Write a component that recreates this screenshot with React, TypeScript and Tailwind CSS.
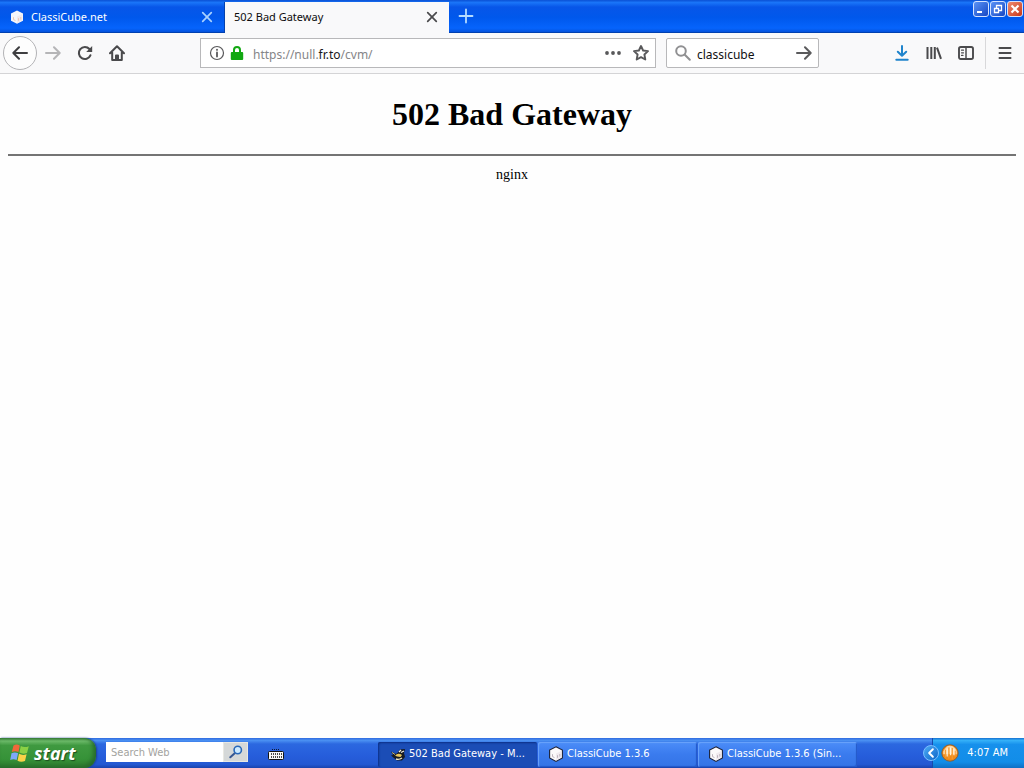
import type { ReactNode } from "react";

const UI = "font-['Noto_Sans','Open_Sans',sans-serif]";
const TASK = "font-['DejaVu_Sans_Condensed','DejaVu_Sans',sans-serif]";

function Stroke({ children, className = "size-4", w = 2 }: { children: ReactNode; className?: string; w?: number }) {
  return (
    <svg viewBox="0 0 16 16" className={className} fill="none" stroke="currentColor" strokeWidth={w} strokeLinecap="round" strokeLinejoin="round" aria-hidden="true">
      {children}
    </svg>
  );
}

function CubeIcon({ outline = false }: { outline?: boolean }) {
  return (
    <svg viewBox="0 0 16 16" className="size-4 shrink-0" aria-hidden="true">
      {outline ? (
        <path d="M8 .8 14.4 4v8L8 15.4 1.6 12V4z" fill="#fbf8fa" stroke="#1c2238" strokeWidth="1.1" />
      ) : (
        <path d="M8 1.5 14 4.5v7.2L8 14.8l-6-3.1V4.5z" fill="#f5f6fb" />
      )}
      <path d="M8 7.5 13.3 4.9v6.6L8 14.2z" fill="#f0e9ee" />
      <path d="M4.5 8.2v2.4l2 1M9.5 9.2v2.6M11.8 8v2.6" stroke={outline ? "#b9acb6" : "#ecc3ad"} strokeWidth=".9" fill="none" />
    </svg>
  );
}

function CloseIcon() {
  return (
    <Stroke className="size-4" w={1.7}>
      <path d="m3.7 3.7 8.6 8.6m0-8.6-8.6 8.6" />
    </Stroke>
  );
}

function ToolButton({ label, className = "text-[#4a4a4c]", children }: { label: string; className?: string; children: ReactNode }) {
  return (
    <button type="button" aria-label={label} className={`flex size-8 items-center justify-center ${className}`}>
      {children}
    </button>
  );
}

function WindowButton({ label, close = false, children }: { label: string; close?: boolean; children: ReactNode }) {
  return (
    <button
      type="button"
      aria-label={label}
      className={`flex size-4 items-center justify-center rounded-[3px] border border-[#d3e2ff] ${close ? "bg-linear-to-br from-[#ee8b70] to-[#c83310]" : "bg-linear-to-br from-[#5b92f5] to-[#1746c4]"}`}
    >
      <svg viewBox="0 0 14 14" className="size-3.5 text-white" fill="none" stroke="currentColor" aria-hidden="true">
        {children}
      </svg>
    </button>
  );
}

function TabStrip() {
  return (
    <header className="flex h-[33px] items-stretch border-b border-[#0040b0] bg-[linear-gradient(180deg,#0a50d4_0%,#1a75f8_8%,#0756e8_22%,#0058ec_55%,#0664fc_88%,#0452dc_100%)]">
      <div className="mt-0.5 flex w-[225px] items-center border-r border-[#0541ad] pl-[9px] pr-[9px] text-white">
        <CubeIcon />
        <span className={`ml-1.5 flex-1 text-[11px] ${UI}`}>ClassiCube.net</span>
        <button type="button" aria-label="Close ClassiCube.net" className="text-[#a9d2ff]"><CloseIcon /></button>
      </div>
      <div className="mt-0.5 -mb-px flex w-56 items-center bg-[#f9f9fa] px-[9px] pb-px text-[#0c0c0d]">
        <span className={`flex-1 text-[11px] ${UI}`}>502 Bad Gateway</span>
        <button type="button" aria-label="Close 502 Bad Gateway" className="text-[#4a4a4c]"><CloseIcon /></button>
      </div>
      <button type="button" aria-label="New tab" className="flex w-[34px] items-center justify-center text-[#b5dcff]">
        <Stroke w={1.8}><path d="M8 1.5v13M1.5 8h13" /></Stroke>
      </button>
      <div className="ml-auto flex gap-px pr-px pt-px">
        <WindowButton label="Minimize"><path d="M3 10h5" strokeWidth="2" /></WindowButton>
        <WindowButton label="Restore"><path d="M5.5 6V3.5h5v5H8M3.5 6.5h4v4h-4z" strokeWidth="1.3" /></WindowButton>
        <WindowButton label="Close window" close><path d="m3.5 3.5 7 7m0-7-7 7" strokeWidth="2.2" /></WindowButton>
      </div>
    </header>
  );
}

function Toolbar() {
  return (
    <nav aria-label="Navigation" className="flex h-[41px] items-center border-b border-[#d4d4d6] bg-[#f9f9fa]">
      <div className="flex w-[200px] shrink-0 items-center pl-[3px]">
        <button type="button" aria-label="Back" className="flex size-[34px] items-center justify-center rounded-full border border-[#b3b3b6] bg-[#fdfdfd] text-[#3e3e40]">
          <Stroke><path d="M15 8H1.3M7 2.3 1.3 8 7 13.7" /></Stroke>
        </button>
        <ToolButton label="Forward" className="text-[#b5b5b7]">
          <Stroke><path d="M1 8h13.5M9 2.3 14.7 8 9 13.7" /></Stroke>
        </ToolButton>
        <ToolButton label="Reload">
          <Stroke w={2.1}><path d="M13.4 10.3A6 6 0 1 1 12.4 4" /><path d="M15.2 1v6H9.2z" fill="currentColor" stroke="none" /></Stroke>
        </ToolButton>
        <ToolButton label="Home">
          <Stroke><path d="M1 8.3 8 1.2l7 7.1M3.2 7.6V15h9.6V7.6" /><path d="M7 14.8v-4.3h2v4.3" /></Stroke>
        </ToolButton>
      </div>
      <div className="flex h-[30px] min-w-0 flex-1 items-center border border-[#b8b8ba] bg-white px-2 text-[#58585a]">
        <button type="button" aria-label="Site information">
          <Stroke w={1.2}><circle cx="8" cy="8" r="6.5" /><path d="M8 7.5v4M8 4.6v.3" strokeWidth="1.8" /></Stroke>
        </button>
        <svg viewBox="0 0 16 16" className="ml-1 size-4 text-[#12a812]" fill="currentColor" role="img" aria-label="Secure connection">
          <path d="M4 7V5a4 4 0 0 1 8 0v2h1.2a1 1 0 0 1 1 1v6a1 1 0 0 1-1 1H2.8a1 1 0 0 1-1-1V8a1 1 0 0 1 1-1zm2 0h4V5a2 2 0 0 0-4 0z" />
        </svg>
        <a href="#page" className={`ml-2 flex-1 pt-1 text-[12px] text-[#858587] ${UI}`}>
          https://null.<span className="text-[#18181a]">fr.to</span>/cvm/
        </a>
        <button type="button" aria-label="Page actions">
          <svg viewBox="0 0 16 16" className="size-4" fill="currentColor" aria-hidden="true"><circle cx="2" cy="8" r="1.9" /><circle cx="8" cy="8" r="1.9" /><circle cx="14" cy="8" r="1.9" /></svg>
        </button>
        <button type="button" aria-label="Bookmark this page" className="-mr-0.5 ml-3">
          <Stroke w={1.9}><path d="m8 1 2.1 4.5 4.9.6-3.6 3.4.9 5L8 12.1l-4.3 2.4.9-5L1 6.1l4.9-.6z" /></Stroke>
        </button>
      </div>
      <form className="ml-2.5 flex h-[30px] w-[153px] items-center rounded-[2px] border border-[#b8b8ba] bg-white pl-2 pr-1.5" onSubmit={(e) => e.preventDefault()}>
        <Stroke className="size-4 shrink-0 text-[#909092]"><circle cx="6" cy="6" r="4.8" /><path d="m9.8 9.8 5 5" /></Stroke>
        <input aria-label="Search" defaultValue="classicube" className={`ml-1.5 w-0 min-w-0 flex-1 bg-transparent pt-1 text-[12px] text-[#101012] outline-none ${UI}`} />
        <button type="submit" aria-label="Submit search" className="text-[#5a5a5c]">
          <Stroke><path d="M1 8h13.5M9 2.3 14.7 8 9 13.7" /></Stroke>
        </button>
      </form>
      <div className="ml-[67px] flex items-center pr-[3px]">
        <ToolButton label="Downloads" className="text-[#1f84cc]">
          <Stroke><path d="M8 1v9.5M3.8 6.7 8 10.8l4.2-4.1M2.3 14.8h11.4" /></Stroke>
        </ToolButton>
        <ToolButton label="Library">
          <Stroke><path d="M1.5 2v12M5.3 2v12M8.8 2v12M11 2.7l4 11.2" strokeLinecap="butt" strokeWidth="2" /></Stroke>
        </ToolButton>
        <ToolButton label="Sidebars">
          <Stroke w={1.9}><rect x="1" y="2" width="14" height="12" rx="1.8" /><path d="M8 2v12" strokeWidth="1.5" /><path d="M3.5 5.2h2M3.5 7.8h2M3.5 10.4h1.5" strokeWidth="1.2" /></Stroke>
        </ToolButton>
        <span className="mx-[3px] h-8 w-px bg-[#d8d8da]" />
        <ToolButton label="Open menu">
          <Stroke><path d="M2.5 3h11M2.5 8h11M2.5 13h11" /></Stroke>
        </ToolButton>
      </div>
    </nav>
  );
}

function BrowserIcon() {
  return (
    <svg viewBox="0 0 16 16" className="size-4 shrink-0" aria-hidden="true">
      <path d="M1 4.5 6 7l2-1.5 2-3 5-.5-1 4 1 4-3 3.5H7L4 11 1 8.5 3 8z" fill="#171b22" />
      <path d="m9 5 2-2M11 5.5 14 4" stroke="#f4f0e0" strokeWidth="1.2" />
      <path d="M5 8.5q3-3 7-.5l-1.5 2L7 9.5z" fill="#e9c65a" />
      <path d="M6 12q3 1 6-1" stroke="#f1e8c8" fill="none" strokeWidth="1.4" />
      <path d="m2 5.5 3 2" stroke="#c9b67a" strokeWidth="1" />
    </svg>
  );
}

function TaskButton({ active = false, icon, children }: { active?: boolean; icon: ReactNode; children: ReactNode }) {
  return (
    <button
      type="button"
      className={`flex h-[25px] w-[159px] items-center gap-[3px] rounded-[2px] text-left text-[11px] text-white ${TASK} ${active ? "bg-[#1b4db6] pl-3 pt-px shadow-[inset_1px_1px_2px_#0c2f86]" : "bg-linear-to-b from-[#4c8df8] via-[#3a7bee] to-[#3474e6] pl-2.5 shadow-[inset_1px_1px_1px_#6ba4fb,inset_-1px_-1px_1px_#2358c8]"}`}
    >
      {icon}
      <span className="truncate">{children}</span>
    </button>
  );
}

function Taskbar() {
  return (
    <footer className="flex h-[30px] items-stretch bg-[linear-gradient(180deg,#2f6be0_0%,#4a90f2_8%,#2c68e0_20%,#265ddb_60%,#2358d2_88%,#1a43ad_100%)]">
      <button type="button" className="flex w-24 items-center rounded-r-[12px] bg-[linear-gradient(180deg,#347a34_0%,#6bb968_10%,#3f9940_25%,#369238_70%,#2c7a2e_100%)] pl-2.5 shadow-[inset_-3px_-2px_4px_#276b2b,1px_0_2px_#1b418f]">
        <svg viewBox="0 0 20 20" className="size-5" aria-hidden="true">
          <path d="M3.5 2.4Q6.5.4 9.8 2.4L8.5 9Q5 7.4 1.8 9z" fill="#f0683a" />
          <path d="M10.8 3q3.6 2 8 .2L17 10q-4 1.6-7.6-.4z" fill="#8ad045" />
          <path d="M1.5 10.2q3.2-1.6 6.6 0l-1.5 6.8q-3.2-1.6-6.4 0z" fill="#7ea8fa" />
          <path d="M9 10.8q3.6 2 7.6.4L15 18q-4 1.6-7.5-.3z" fill="#fad248" />
        </svg>
        <span className="ml-1 text-lg font-bold italic leading-5 text-white [text-shadow:1px_1px_1px_#1c4d1e] font-['Open_Sans',sans-serif]">start</span>
      </button>
      <form className="ml-2.5 flex items-center pb-0.5" onSubmit={(e) => e.preventDefault()}>
        <input aria-label="Search Web" placeholder="Search Web" className={`h-5 w-[117px] bg-white px-[5px] text-[11px] text-[#333] outline-none placeholder:text-[#a3a3a0] ${TASK}`} />
        <button type="submit" aria-label="Search the web" className="flex h-5 w-[25px] items-center justify-center border border-[#e8e8e2] bg-[#d5d8d8]">
          <svg viewBox="0 0 16 16" className="size-3.5" fill="none" aria-hidden="true">
            <path d="m6.5 9.5-5 4.5" stroke="#375791" strokeWidth="2.3" strokeLinecap="round" />
            <circle cx="10" cy="5.7" r="4.2" fill="#cdeaff" stroke="#2868b8" strokeWidth="1.8" />
          </svg>
        </button>
      </form>
      <button type="button" aria-label="On-screen keyboard" className="ml-5 flex items-center pt-0.5">
        <svg viewBox="0 0 16 16" className="size-4" fill="none" aria-hidden="true">
          <path d="M4 3.5h8" stroke="#101a35" strokeDasharray="1 1" />
          <rect x=".5" y="5.5" width="15" height="8" rx="1" fill="#f8f8f8" stroke="#111" />
          <path d="M3 8h11M3 11h11" stroke="#111" strokeWidth="1.6" strokeDasharray="1 1" />
        </svg>
      </button>
      <div className="ml-auto flex items-center gap-px pt-0.5">
        <TaskButton active icon={<BrowserIcon />}>502 Bad Gateway - M...</TaskButton>
        <TaskButton icon={<CubeIcon outline />}>ClassiCube 1.3.6</TaskButton>
        <TaskButton icon={<CubeIcon outline />}>ClassiCube 1.3.6 (Sin...</TaskButton>
      </div>
      <div className="relative ml-[75px] flex w-[92px] items-center border-l border-[#174bab] bg-[linear-gradient(180deg,#1670d0_0%,#34b0f8_8%,#1690ec_22%,#128de8_80%,#0f6fc4_100%)] pl-2 pr-4">
        <button type="button" aria-label="Show hidden icons" className="absolute -left-2.5 flex size-4 items-center justify-center rounded-full border border-[#7abfff] bg-linear-to-br from-[#4caaf5] to-[#0866c8] text-white">
          <Stroke className="size-3" w={2.5}><path d="M10.5 3 5.5 8l5 5" /></Stroke>
        </button>
        <svg viewBox="0 0 16 16" className="size-[18px] shrink-0" role="img" aria-label="Background application">
          <circle cx="8" cy="8" r="7.3" fill="#ef8b19" stroke="#875a32" strokeWidth=".8" />
          <path d="M2 6.5Q5 1 8 1.6 12 1.6 14 6.5L14 9 2 9z" fill="#ffd7a0" />
          <path d="M4 5v7M7 3v10M10 3.5v10M12.5 6v5" stroke="#f79b31" strokeWidth="1.1" />
          <path d="M5.5 4v7M8.5 3v7M11.5 4v6" stroke="#fff4dc" strokeWidth="1" />
        </svg>
        <time className={`ml-auto whitespace-nowrap text-[11px] text-white ${TASK}`}>4:07 AM</time>
      </div>
    </footer>
  );
}

export default function App() {
  return (
    <div className="flex min-h-screen flex-col bg-[#fefefe]">
      <TabStrip />
      <Toolbar />
      <main id="page" className="flex-1 px-2 text-center text-black font-['Liberation_Serif',serif]">
        <h1 className="pt-[22px] text-[32px] font-bold leading-9">502 Bad Gateway</h1>
        <hr className="mt-[22px] border-t-2 border-[#747474]" />
        <p className="mt-2.5 text-[14px] leading-[18px]">nginx</p>
      </main>
      <Taskbar />
    </div>
  );
}
